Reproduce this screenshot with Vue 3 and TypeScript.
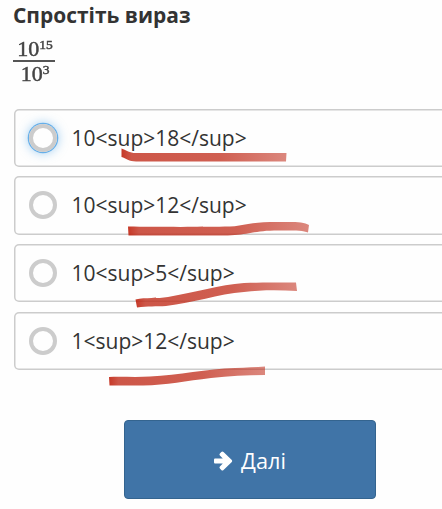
<script setup lang="ts">
import { ref } from 'vue'

interface Option {
  id: number
  label: string
}

const options: Option[] = [
  { id: 0, label: '10<sup>18</sup>' },
  { id: 1, label: '10<sup>12</sup>' },
  { id: 2, label: '10<sup>5</sup>' },
  { id: 3, label: '1<sup>12</sup>' },
]
const focused = ref(0)
</script>

<template>
  <main class="page">
    <h1 class="title">Спростіть вираз</h1>
    <div class="fraction">
      <div class="num">10<span class="exp">15</span></div>
      <div class="den">10<span class="exp">3</span></div>
    </div>
    <div class="options">
      <div
        v-for="option in options"
        :key="option.id"
        class="option"
        @click="focused = option.id"
      >
        <span class="radio" :class="{ focused: focused === option.id }"></span>
        <span class="label">{{ option.label }}</span>
      </div>
    </div>
    <button class="next" type="button">
      <svg class="arrow" viewBox="0 0 19 20">
        <path d="M1 7.500H8.800L5.900 4.600Q4.900 3.600 5.900 2.600L7.300 1.100Q8.400 0 9.500 1.100L17.800 9.100Q18.700 10 17.800 10.900L9.500 18.900Q8.400 20 7.300 18.900L5.900 17.400Q4.900 16.400 5.900 15.400L8.800 12.500H1Q0 12.500 0 11.300V8.700Q0 7.500 1 7.500Z" />
      </svg>
      <span>Далі</span>
    </button>
    <svg class="marks" viewBox="0 0 442 509">
      <defs>
        <linearGradient id="ink">
          <stop offset="0" stop-color="#c0220f" stop-opacity=".9" />
          <stop offset=".06" stop-color="#c02a18" stop-opacity=".79" />
          <stop offset=".6" stop-color="#c02a18" stop-opacity=".75" />
          <stop offset="1" stop-color="#c02a18" stop-opacity=".56" />
        </linearGradient>
      </defs>
      <path d="M121.500 148.500C127 150.500 129 153 136 153H286.500L286 161.500H136C129 161.500 126 158.500 121.500 157Z" />
      <path d="M128 226.500C158 227 204 227 230 226.500C243 226 252 222 270 222C291 222 303 221 309 225L308 232.500C302 230 290 230.500 274 230.500C252 231 246 235.500 224 235.500H128.500Z" />
      <path d="M135.500 299.500C146 297 157 299 168 297C196 292 219 285 244 283C260 282 278 282.500 296 282.500L297 291C278 290 260 290 244 292C218 294 193 303 166 306C156 306.500 148 306 137 307.500Z" />
      <path d="M109 377C123 376.500 137 377.500 150 376.500C179 375 207 369 235 368C246 367.500 256 367 265 366.500V375C246 375 229 376 211 378C186 381 167 385 143 385.500H109.500Z" />
    </svg>
  </main>
</template>

<style>
body {
  margin: 0;
  background: #fefefe;
  overflow: hidden;
}
</style>

<style scoped>
.page {
  position: relative;
  box-sizing: border-box;
  width: 442px;
  height: 509px;
  padding-left: 14px;
  overflow: hidden;
  color: #333;
  font-family: 'Open Sans', 'Noto Sans', sans-serif;
}
.title {
  margin: 0 0 0 -1px;
  padding-top: 1px;
  height: 34px;
  font-size: 20.950px;
  line-height: 28px;
  font-weight: 700;
  white-space: nowrap;
}
.fraction {
  box-sizing: border-box;
  width: 42px;
  height: 73.500px;
  padding-top: 0.500px;
  margin-left: -1px;
  font-family: 'Liberation Serif', serif;
  font-size: 22px;
  line-height: 25px;
  text-align: center;
  color: #444;
  filter: blur(0.5px);
  -webkit-text-stroke: 0.5px #444;
}
.num {
  height: 24.500px;
  border-bottom: 2px solid #555;
  padding-left: 2px;
  white-space: nowrap;
}
.den {
  margin-top: -1px;
  padding-left: 2px;
}
.exp {
  position: relative;
  top: -7px;
  font-size: 13.500px;
  line-height: 0;
}
.options {
  display: flex;
  flex-direction: column;
  gap: 9.200px;
}
.option {
  display: flex;
  align-items: center;
  box-sizing: border-box;
  width: 460px;
  height: 58.500px;
  padding-left: 15.300px;
  border-radius: 5px;
  box-shadow: inset 0 0 0 1.500px #ccc;
}
.radio {
  box-sizing: border-box;
  width: 28px;
  height: 28px;
  border: 4px solid #ccc;
  border-radius: 50%;
}
.radio.focused {
  box-shadow: 0 0 0 1.300px #66afe9, 0 0 10px 2px rgba(102, 175, 233, 0.5);
}
.label {
  margin-left: 14.200px;
  font-size: 21px;
  line-height: 30px;
  white-space: nowrap;
}
.next {
  display: flex;
  align-items: center;
  justify-content: center;
  gap: 8px;
  box-sizing: border-box;
  width: 252px;
  height: 79px;
  margin: 50px 0 0 110px;
  padding: 2px 0 0;
  border: 1px solid #34648f;
  border-radius: 4px;
  background: #4074a7;
  color: #fff;
  font-family: inherit;
  font-size: 21.700px;
  line-height: 30px;
}
.arrow {
  width: 19px;
  height: 20px;
  fill: #fff;
}
.marks {
  position: absolute;
  inset: 0;
  width: 442px;
  height: 509px;
  fill: url(#ink);
  pointer-events: none;
}
</style>
